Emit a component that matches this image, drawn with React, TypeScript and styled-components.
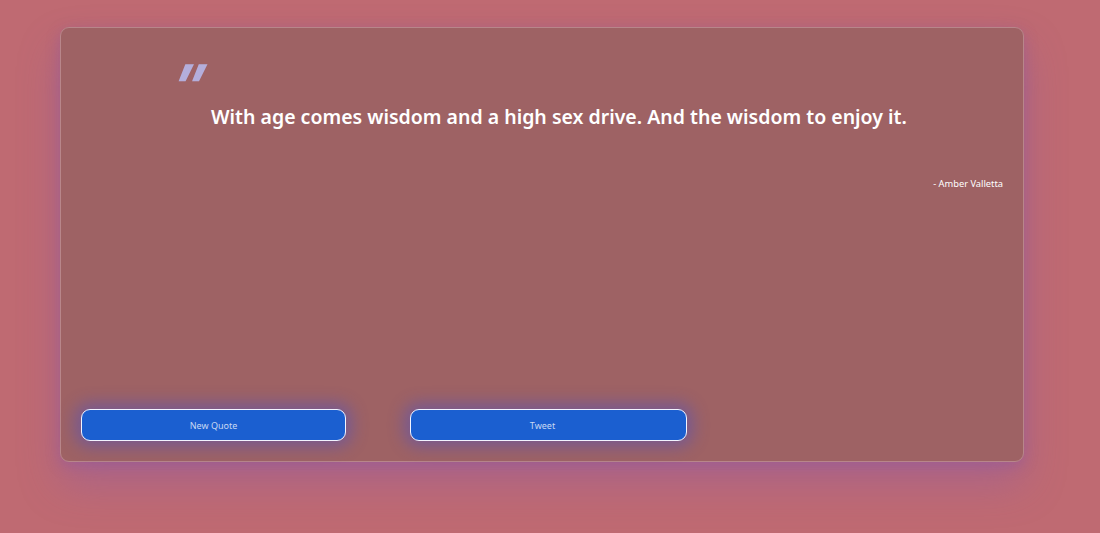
import React from "react";
import styled, { createGlobalStyle } from "styled-components";

const Global = createGlobalStyle`
  html, body { margin: 0; padding: 0; }
  body {
    background: #bf6a72;
    font-family: "Noto Sans", "Open Sans", sans-serif;
    width: 1100px;
    height: 533px;
    overflow: hidden;
  }
`;

const Page = styled.div`
  padding: 27px 0 0 60px;
`;

const Card = styled.div`
  box-sizing: border-box;
  width: 964px;
  height: 435px;
  background: #9e6264;
  border: 1px solid #b8868a;
  border-radius: 9px;
  box-shadow: 0 22px 40px rgba(140, 90, 170, 0.4), 0 4px 14px rgba(130, 80, 170, 0.35);
  padding: 20px;
  display: flex;
  flex-direction: column;
`;

const QuoteBlock = styled.div`
  padding: 0 0 0 130px;
  position: relative;
`;

const QuoteMark = styled.span`
  position: absolute;
  left: 105px;
  top: 5px;
  font-family: "Liberation Sans", sans-serif;
  font-size: 68px;
  font-weight: 700;
  line-height: 68px;
  color: #b4aedb;
  transform: skewX(-24deg) scaleX(0.95);
  transform-origin: left top;
`;

const QuoteText = styled.p`
  margin: 0;
  padding-top: 55px;
  color: #ffffff;
  font-size: 19.5px;
  font-weight: 600;
  line-height: 28px;
`;

const Author = styled.p`
  margin: 46px 0 0;
  text-align: right;
  color: #ffffff;
  font-size: 9.3px;
  line-height: 14px;
`;

const Spacer = styled.div`
  flex: 1;
`;

const Actions = styled.div`
  display: flex;
  gap: 64px;
`;

const Button = styled.button<{ $w: number; $shift?: number }>`
  box-sizing: border-box;
  width: ${(p) => p.$w}px;
  height: 32px;
  padding: 0 ${(p) => p.$shift ?? 0}px 0 0;
  background: #1b5fd0;
  border: 1px solid #f2f4ff;
  border-radius: 9px;
  color: #c7d9f3;
  font-family: "Noto Sans", sans-serif;
  font-size: 9px;
  box-shadow: 0 0 16px 6px rgba(70, 80, 200, 0.45);
  cursor: pointer;
`;

export default function App() {
  return (
    <>
      <Global />
      <Page>
        <Card>
          <QuoteBlock>
            <QuoteMark>"</QuoteMark>
            <QuoteText>With age comes wisdom and a high sex drive. And the wisdom to enjoy it.</QuoteText>
          </QuoteBlock>
          <Author>- Amber Valletta</Author>
          <Spacer />
          <Actions>
            <Button $w={265}>New Quote</Button>
            <Button $w={277} $shift={12}>Tweet</Button>
          </Actions>
        </Card>
      </Page>
    </>
  );
}
